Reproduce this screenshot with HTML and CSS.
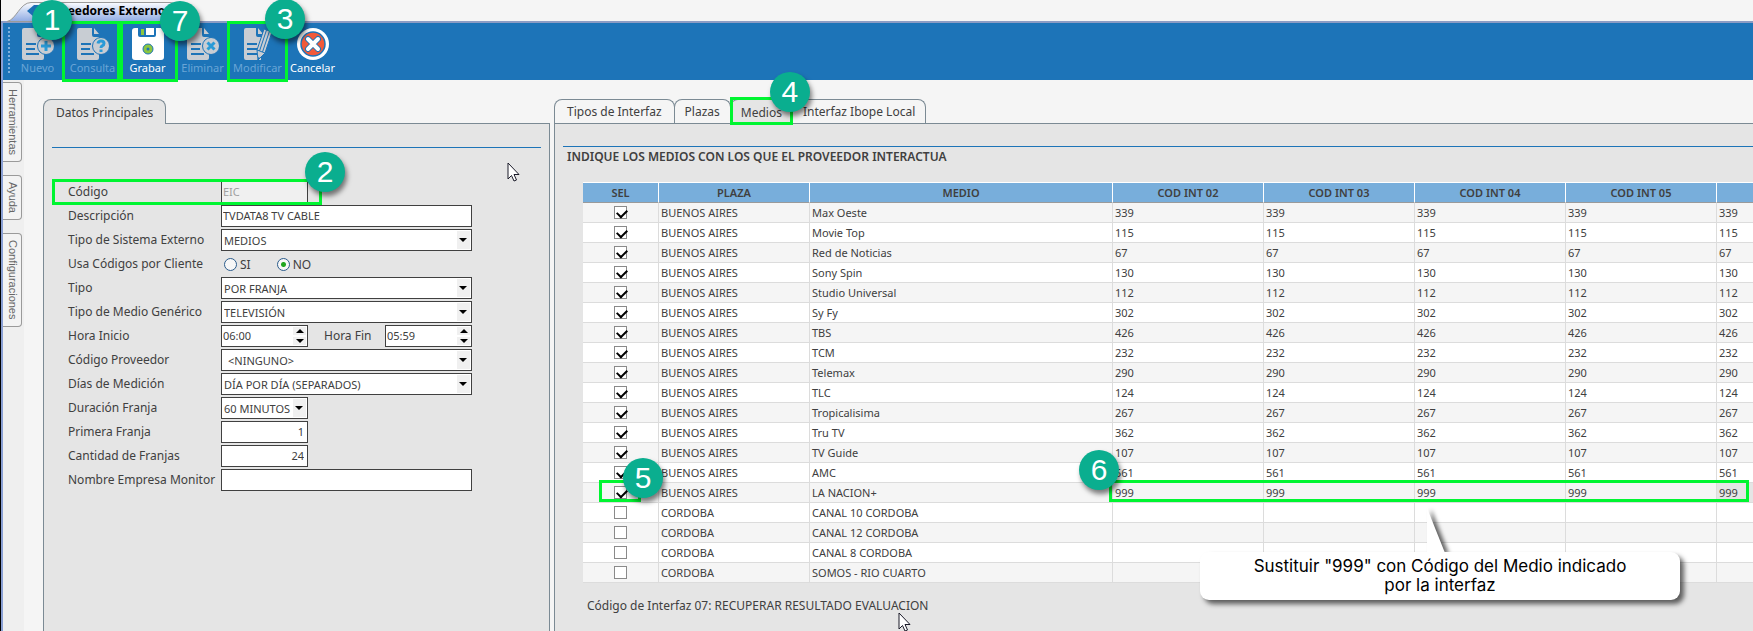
FILE: index.html
```html
<!DOCTYPE html>
<html lang="es">
<head>
  <meta charset="UTF-8">
  <title>Proveedores Externos</title>
  <meta name="viewport" content="width=device-width, initial-scale=1.0">
  <link rel="stylesheet" href="styles.css">
</head>
<body>
  <div class="window">
    <header class="titlebar">
      <svg class="title-tab" width="190" height="23" viewBox="0 0 190 23" aria-hidden="true">
        <defs>
          <linearGradient id="tabFill" x1="0" y1="0" x2="0" y2="1">
            <stop offset="0" stop-color="#fbfcff"/>
            <stop offset="1" stop-color="#8fabe3"/>
          </linearGradient>
        </defs>
        <path d="M3 21.500C12 20 16 2.500 27 2.500H166Q171 2.500 171 8V21.500Z" fill="url(#tabFill)" stroke="#9a9a9a"/>
        <path d="M23 11L30 5L38 5V18L30 17Z" fill="#1c6fb5"/>
      </svg>
      <h1>Proveedores Externos</h1>
    </header>

    <nav class="toolbar">
      <span class="grip"></span>
      <button class="tool" type="button" disabled>
        <svg width="32" height="32" viewBox="0 0 32 32">
          <path class="sheet" d="M2 0H15V7Q15 9 17 9H22V30Q22 32 20 32H2Q0 32 0 30V2Q0 0 2 0ZM17 0L22 6H17Z"/>
          <path class="lines" d="M4 16H14M4 21H13M4 26H17"/>
          <circle class="disc" cx="24" cy="18" r="8.500"/>
          <path class="mark" d="M19 18H29M24 13V23"/>
        </svg>
        <span>Nuevo</span>
      </button>
      <button class="tool" type="button" disabled>
        <svg width="32" height="32" viewBox="0 0 32 32">
          <path class="sheet" d="M2 0H15V7Q15 9 17 9H22V30Q22 32 20 32H2Q0 32 0 30V2Q0 0 2 0ZM17 0L22 6H17Z"/>
          <path class="lines" d="M4 16H14M4 21H13M4 26H17"/>
          <circle class="disc" cx="24" cy="18" r="8.500"/>
          <path class="mark" d="M21 15.500Q21.500 13 24 13Q27 13 27 15.500Q27 17 25 18Q24 18.600 24 20M24 21.500V24"/>
        </svg>
        <span>Consulta</span>
        <i class="frame"></i>
      </button>
      <button class="tool active" type="button">
        <svg width="32" height="32" viewBox="0 0 32 32">
          <path fill="#fff" d="M3 0H29L32 4V29Q32 32 29 32H3Q0 32 0 29V3Q0 0 3 0Z"/>
          <path fill="#1d74b8" d="M6 0H24V7Q24 9 22 9H8Q6 9 6 7Z"/>
          <path fill="#fff" d="M14 0H22V7H14Z"/>
          <path fill="#8cc63f" d="M9 1H12V7H9Z"/>
          <circle cx="16" cy="21" r="5" fill="#8cc63f" stroke="#1d74b8"/>
          <circle cx="16" cy="21" r="1.500" fill="#1d74b8"/>
        </svg>
        <span>Grabar</span>
        <i class="frame"></i>
      </button>
      <button class="tool" type="button" disabled>
        <svg width="32" height="32" viewBox="0 0 32 32">
          <path class="sheet" d="M2 0H15V7Q15 9 17 9H22V30Q22 32 20 32H2Q0 32 0 30V2Q0 0 2 0ZM17 0L22 6H17Z"/>
          <path class="lines" d="M4 16H14M4 21H13M4 26H17"/>
          <circle class="disc" cx="24" cy="18" r="8.500"/>
          <path class="mark" d="M20.500 14.500L27.500 21.500M27.500 14.500L20.500 21.500"/>
        </svg>
        <span>Eliminar</span>
      </button>
      <button class="tool" type="button" disabled>
        <svg width="32" height="32" viewBox="0 0 32 32">
          <path class="sheet" d="M4 0H14V7Q14 9 16 9H19V32H4Q2 32 2 30V2Q2 0 4 0ZM16 0L21 6H16Z"/>
          <path class="lines" d="M5 16H15M5 21H15M5 26H15"/>
          <path d="M22 1L30 4L23 25L16 32L15 22Z" fill="#c8cdd3" stroke="#1d74b8"/>
          <path d="M24.500 2L17.500 23M27.500 3L20.500 24M15 22L23 25M16 32L17 29" fill="none" stroke="#1d74b8"/>
        </svg>
        <span>Modificar</span>
        <i class="frame"></i>
      </button>
      <button class="tool active" type="button">
        <svg width="32" height="32" viewBox="0 0 32 32">
          <circle cx="16" cy="16" r="16" fill="#fff"/>
          <circle cx="16" cy="16" r="12" fill="#f15a3a" stroke="#1d74b8" stroke-width="1.500"/>
          <path d="M11 11L21 21M21 11L11 21" stroke="#1d74b8" stroke-width="6" stroke-linecap="round"/>
          <path d="M11 11L21 21M21 11L11 21" stroke="#fff" stroke-width="4" stroke-linecap="round"/>
        </svg>
        <span>Cancelar</span>
      </button>
      <b class="badge badge-1">1</b>
      <b class="badge badge-7">7</b>
      <b class="badge badge-3">3</b>
    </nav>

    <main class="workspace">
      <aside class="dock">
        <button type="button">Herramientas</button>
        <button type="button">Ayuda</button>
        <button type="button">Configuraciones</button>
      </aside>

      <section class="pane pane-main">
        <div class="tabs">
          <button class="tab selected" type="button">Datos Principales</button>
        </div>
        <div class="sheet-body">
          <form class="form">
            <div class="row row-code">
              <label for="codigo">Código</label>
              <input class="short" id="codigo" type="text" value="EIC" disabled>
              <i class="frame"></i>
              <b class="badge badge-2">2</b>
            </div>
            <div class="row">
              <label for="descripcion">Descripción</label>
              <input id="descripcion" type="text" value="TVDATA8 TV CABLE">
            </div>
            <div class="row">
              <label for="sistema">Tipo de Sistema Externo</label>
              <div class="combo"><select id="sistema"><option>MEDIOS</option></select></div>
            </div>
            <div class="row">
              <span class="label">Usa Códigos por Cliente</span>
              <div class="radios">
                <label><input type="radio" name="cliente">SI</label>
                <label><input type="radio" name="cliente" checked>NO</label>
              </div>
            </div>
            <div class="row">
              <label for="tipo">Tipo</label>
              <div class="combo"><select id="tipo"><option>POR FRANJA</option></select></div>
            </div>
            <div class="row">
              <label for="generico">Tipo de Medio Genérico</label>
              <div class="combo"><select id="generico"><option>TELEVISIÓN</option></select></div>
            </div>
            <div class="row">
              <label for="inicio">Hora Inicio</label>
              <div class="spin">
                <input id="inicio" type="text" value="06:00">
                <div class="arrows"><button type="button" aria-label="Subir"></button><button type="button" aria-label="Bajar"></button></div>
              </div>
              <label class="inner" for="fin">Hora Fin</label>
              <div class="spin">
                <input id="fin" type="text" value="05:59">
                <div class="arrows"><button type="button" aria-label="Subir"></button><button type="button" aria-label="Bajar"></button></div>
              </div>
            </div>
            <div class="row">
              <label for="proveedor">Código Proveedor</label>
              <div class="combo"><select class="indent" id="proveedor"><option>&lt;NINGUNO&gt;</option></select></div>
            </div>
            <div class="row">
              <label for="dias">Días de Medición</label>
              <div class="combo"><select id="dias"><option>DÍA POR DÍA (SEPARADOS)</option></select></div>
            </div>
            <div class="row">
              <label for="duracion">Duración Franja</label>
              <div class="combo short"><select id="duracion"><option>60 MINUTOS</option></select></div>
            </div>
            <div class="row">
              <label for="primera">Primera Franja</label>
              <input class="short number" id="primera" type="text" value="1">
            </div>
            <div class="row">
              <label for="cantidad">Cantidad de Franjas</label>
              <input class="short number" id="cantidad" type="text" value="24">
            </div>
            <div class="row">
              <label for="empresa">Nombre Empresa Monitor</label>
              <input id="empresa" type="text">
            </div>
          </form>
          <svg class="cursor cursor-form" width="13" height="20" viewBox="0 0 13 20"><path d="M1 1V17L4.500 13.500L7 19L9.500 18L7 12.500H12Z" fill="#fff" stroke="#1a1a28"/></svg>
        </div>
      </section>

      <section class="pane pane-detail">
        <div class="tabs">
          <button class="tab" type="button">Tipos de Interfaz</button>
          <button class="tab" type="button">Plazas</button>
          <button class="tab selected" type="button">Medios<i class="frame"></i><b class="badge badge-4">4</b></button>
          <button class="tab" type="button">Interfaz Ibope Local</button>
        </div>
        <div class="sheet-body">
          <h2>INDIQUE LOS MEDIOS CON LOS QUE EL PROVEEDOR INTERACTUA</h2>
          <div class="grid">
            <div class="grid-scroll">
              <table>
                <colgroup>
                  <col class="c-sel"><col class="c-plaza"><col class="c-medio">
                  <col class="c-cod"><col class="c-cod"><col class="c-cod"><col class="c-cod"><col class="c-cod">
                </colgroup>
                <thead>
                  <tr>
                    <th>SEL</th><th>PLAZA</th><th>MEDIO</th>
                    <th>COD INT 02</th><th>COD INT 03</th><th>COD INT 04</th><th>COD INT 05</th><th></th>
                  </tr>
                </thead>
                <tbody id="medios"></tbody>
              </table>
            </div>
            <i class="frame frame-sel"></i>
            <i class="frame frame-codes"></i>
            <b class="badge badge-5">5</b>
            <b class="badge badge-6">6</b>
            <div class="callout">
              <svg class="tail" width="30" height="48" viewBox="0 0 30 48" aria-hidden="true"><path d="M2 2L20 47H2Z" fill="#fff"/></svg>
              <p>Sustituir "999" con Código del Medio indicado<br>por la interfaz</p>
            </div>
          </div>
          <p class="status">Código de Interfaz 07: RECUPERAR RESULTADO EVALUACION</p>
          <svg class="cursor cursor-status" width="13" height="20" viewBox="0 0 13 20"><path d="M1 1V17L4.500 13.500L7 19L9.500 18L7 12.500H12Z" fill="#fff" stroke="#1a1a28"/></svg>
        </div>
      </section>
    </main>
  </div>

<script>
  const medios = [
    ['BUENOS AIRES', 'Max Oeste', '339'],
    ['BUENOS AIRES', 'Movie Top', '115'],
    ['BUENOS AIRES', 'Red de Noticias', '67'],
    ['BUENOS AIRES', 'Sony Spin', '130'],
    ['BUENOS AIRES', 'Studio Universal', '112'],
    ['BUENOS AIRES', 'Sy Fy', '302'],
    ['BUENOS AIRES', 'TBS', '426'],
    ['BUENOS AIRES', 'TCM', '232'],
    ['BUENOS AIRES', 'Telemax', '290'],
    ['BUENOS AIRES', 'TLC', '124'],
    ['BUENOS AIRES', 'Tropicalisima', '267'],
    ['BUENOS AIRES', 'Tru TV', '362'],
    ['BUENOS AIRES', 'TV Guide', '107'],
    ['BUENOS AIRES', 'AMC', '561'],
    ['BUENOS AIRES', 'LA NACION+', '999'],
    ['CORDOBA', 'CANAL 10 CORDOBA', ''],
    ['CORDOBA', 'CANAL 12 CORDOBA', ''],
    ['CORDOBA', 'CANAL 8 CORDOBA', ''],
    ['CORDOBA', 'SOMOS - RIO CUARTO', '']
  ];

  document.getElementById('medios').innerHTML = medios.map(([plaza, medio, codigo]) => `
    <tr class="${codigo === '999' ? 'current' : ''}">
      <td class="sel"><input type="checkbox" aria-label="${medio}" ${codigo ? 'checked' : ''}></td>
      <td>${plaza}</td>
      <td>${medio}</td>
      ${`<td>${codigo}</td>`.repeat(5)}
    </tr>`).join('');
</script>
</body>
</html>
```
FILE: styles.css
```css
* {
  box-sizing: border-box;
}

body {
  margin: 0;
  background: #f5f5f5;
  color: #404040;
  font-family: "Noto Sans", sans-serif;
  font-size: 12px;
}

button,
input,
select {
  font-family: inherit;
  color: inherit;
  margin: 0;
}

h1,
h2,
p {
  margin: 0;
}

.window {
  display: flex;
  flex-direction: column;
  min-height: 100vh;
  border-left: 1px solid #000;
}

/* Title and toolbar */
.titlebar {
  position: relative;
  display: flex;
  align-items: center;
  height: 23px;
  padding-left: 40px;
  border-bottom: 2px solid #8c9cc4;
}

.title-tab {
  position: absolute;
  left: 3px;
  top: 0;
}

.titlebar h1 {
  position: relative;
  font-size: 12px;
  line-height: 20px;
  color: #000;
}

.toolbar {
  position: relative;
  display: flex;
  height: 57px;
  padding-left: 5px;
  border-left: 2px solid #8aa0d4;
  background: #1d74b8;
}

.grip {
  width: 2px;
  margin: 4px 0 6px;
  background: repeating-linear-gradient(#7fb0dc 0 2px, transparent 2px 4px);
}

.tool {
  position: relative;
  display: flex;
  flex-direction: column;
  align-items: center;
  width: 55px;
  padding: 5px 0 0;
  border: 0;
  background: none;
  font-size: 11px;
  line-height: 16px;
  color: #69a5d6;
  white-space: nowrap;
}

.tool svg {
  flex: none;
}

.tool.active {
  color: #fff;
}

.sheet {
  fill: #c8cdd3;
}

.lines {
  fill: none;
  stroke: #1d74b8;
  stroke-width: 2;
}

.disc {
  fill: #c8cdd3;
  stroke: #1d74b8;
  stroke-width: 1;
}

.mark {
  fill: none;
  stroke: #2a9bd7;
  stroke-width: 3;
}

/* Step marks laid over the screen */
.frame {
  position: absolute;
  border: 3px solid #00f531;
  pointer-events: none;
}

.tool .frame {
  inset: -2px -3px;
}

.badge {
  position: absolute;
  z-index: 5;
  width: 40px;
  height: 40px;
  border-radius: 50%;
  background: #0aae8f;
  box-shadow: 2px 4px 5px rgba(0, 0, 0, 0.5);
  color: #fff;
  font: 30px/40px "Liberation Sans", sans-serif;
  text-align: center;
}

.badge-1 {
  left: 29px;
  top: -23px;
}

.badge-7 {
  left: 157px;
  top: -22px;
}

.badge-3 {
  left: 262px;
  top: -24px;
}

.badge-2 {
  left: 237px;
  top: -29px;
}

.badge-4 {
  left: 39px;
  top: -28px;
}

.badge-5 {
  left: 40px;
  top: 276px;
}

.badge-6 {
  left: 496px;
  top: 268px;
}

/* Workspace */
.workspace {
  flex: 1;
  display: flex;
  border-left: 2px solid #8aa0d4;
}

.dock {
  display: flex;
  flex-direction: column;
  align-items: flex-start;
  gap: 13px;
  width: 21px;
  margin-right: 19px;
  padding-top: 2px;
  background: #efefef;
}

.dock button {
  width: 19px;
  padding: 6px 0;
  border: 1px solid #9a9a9a;
  border-left: 0;
  border-radius: 0 4px 4px 0;
  background: #f3f3f3;
  font: 11px/17px "Liberation Sans", sans-serif;
  color: #666;
  writing-mode: vertical-rl;
}

.pane {
  display: flex;
  flex-direction: column;
  padding-top: 19px;
}

.pane-main {
  flex: 0 0 507px;
}

.pane-detail {
  flex: 1;
  min-width: 0;
  margin-left: 4px;
}

.tabs {
  display: flex;
  height: 25px;
}

.tab {
  position: relative;
  z-index: 1;
  height: 24px;
  padding: 0 12px;
  border: 1px solid #7b8a94;
  border-bottom: 0;
  border-radius: 8px 8px 0 0;
  background: #f5f5f5;
  font-size: 12px;
  white-space: nowrap;
}

.tab + .tab {
  margin-left: -1px;
  padding: 0 10px;
}

.tab.selected {
  z-index: 2;
  height: 25px;
  background: #e5e5e5;
}

.tab .frame {
  inset: -3px -1px -1px;
}

.sheet-body {
  position: relative;
  flex: 1;
  min-width: 0;
  margin-top: -1px;
  border: 1px solid #7b8a94;
  border-bottom: 0;
  background: #e5e5e5;
}

.pane-detail .sheet-body {
  border-right: 0;
}

/* Form */
.form {
  display: flex;
  flex-direction: column;
  gap: 2px;
  margin: 23px 8px 0;
  padding: 33px 0 0 16px;
  border-top: 1px solid #1d74b8;
}

.row {
  position: relative;
  display: flex;
  align-items: center;
  height: 22px;
}

.row > label,
.row > .label {
  width: 153px;
  line-height: 20px;
  white-space: nowrap;
}

.row > label.inner {
  width: 77px;
  padding-left: 16px;
}

.row input[type="text"],
.combo {
  width: 251px;
  height: 22px;
  padding: 0 1px 2px;
  border: 1px solid #404040;
  border-radius: 0;
  background: #fff;
  font-size: 11px;
}

.row input.short,
.combo.short {
  width: 87px;
}

.row input:disabled {
  background: #f0f0f0;
  color: #a0a0a0;
}

.row input.number {
  padding-right: 3px;
  text-align: right;
}

.row-code .frame {
  left: -16px;
  top: -2px;
  width: 270px;
  height: 26px;
}

.combo {
  position: relative;
  padding: 0;
}

.combo select {
  display: block;
  width: 100%;
  height: 20px;
  padding: 0 14px 0 2px;
  border: 0;
  background: none;
  font-size: 11px;
  appearance: none;
}

.combo select.indent {
  padding-left: 6px;
}

.combo::after {
  content: "";
  position: absolute;
  right: 1px;
  top: 1px;
  width: 13px;
  height: 18px;
  background: #f0f0f0;
  pointer-events: none;
}

.combo::before {
  content: "";
  position: absolute;
  z-index: 1;
  right: 4px;
  top: 8px;
  border: 4px solid transparent;
  border-top-color: #000;
  border-bottom: 0;
  pointer-events: none;
}

.radios {
  display: flex;
  gap: 26px;
  padding-left: 3px;
}

.radios label {
  display: flex;
  align-items: center;
  gap: 3px;
}

.radios input {
  width: 13px;
  height: 13px;
  border: 1px solid #2b5c8c;
  border-radius: 50%;
  background: #f7f7f7;
  appearance: none;
}

.radios input:checked {
  background: radial-gradient(circle, #1fa51f 0 2px, #f7f7f7 3px);
}

.spin {
  position: relative;
}

.row .spin input {
  display: block;
  width: 87px;
}

.arrows {
  position: absolute;
  right: 2px;
  top: 2px;
  display: flex;
  flex-direction: column;
  gap: 2px;
}

.arrows button {
  display: flex;
  align-items: center;
  justify-content: center;
  width: 13px;
  height: 8px;
  padding: 0;
  border: 0;
  background: #f0f0f0;
}

.arrows button::after {
  content: "";
  border: 4px solid transparent;
  border-bottom-color: #000;
  border-top: 0;
}

.arrows button:last-child::after {
  border-top: 4px solid #000;
  border-bottom: 0;
}

.cursor {
  position: absolute;
}

.cursor-form {
  left: 463px;
  top: 38px;
}

.cursor-status {
  left: 343px;
  top: 488px;
}

/* Grid of media */
.pane-detail h2 {
  margin: 22px 0 0 8px;
  padding: 1px 4px;
  border-top: 1px solid #1d74b8;
  font-size: 12px;
  font-weight: 600;
  line-height: 18px;
}

.grid {
  position: relative;
  margin: 15px 0 0 28px;
}

.grid-scroll {
  overflow: hidden;
  border-top: 1px solid #fff;
}

table {
  width: 1285px;
  border-collapse: separate;
  border-spacing: 0;
  table-layout: fixed;
}

.c-sel {
  width: 76px;
}

.c-plaza {
  width: 151px;
}

.c-medio {
  width: 303px;
}

.c-cod {
  width: 151px;
}

th {
  height: 20px;
  padding: 0;
  border-right: 1px solid #fff;
  border-bottom: 1px solid #9a9a9a;
  background: #78aedb;
  font-size: 11px;
  font-weight: 600;
  line-height: 16px;
}

td {
  height: 20px;
  padding: 0 2px;
  border-right: 1px solid #dcdcdc;
  border-bottom: 1px solid #dcdcdc;
  background: #fff;
  font-size: 11px;
  line-height: 16px;
  white-space: nowrap;
}

tbody tr:nth-child(odd) td {
  background: #f5f5f5;
}

tbody tr.current td:last-child {
  background: #e5e5e5;
}

td.sel {
  text-align: center;
  line-height: 0;
}

td.sel input {
  width: 13px;
  height: 13px;
  border: 1px solid #8a8a8a;
  background: #fff;
  vertical-align: middle;
  appearance: none;
}

td.sel input:checked::after {
  content: "";
  display: block;
  width: 8px;
  height: 5px;
  margin: 2px 0 0 2px;
  border: solid #000;
  border-width: 0 0 2px 2px;
  transform: rotate(-45deg);
}

.frame-sel {
  left: 16px;
  top: 298px;
  width: 42px;
  height: 22px;
}

.frame-codes {
  left: 526px;
  right: 4px;
  top: 298px;
  height: 22px;
}

.callout {
  position: absolute;
  left: 617px;
  top: 370px;
  width: 480px;
  padding: 5px 0;
  border-radius: 9px;
  background: #fff;
  box-shadow: 4px 4px 5px rgba(0, 0, 0, 0.6);
  color: #000;
  font-family: Inter, sans-serif;
  font-size: 17px;
  line-height: 19px;
  text-align: center;
}

.tail {
  position: absolute;
  left: 225px;
  top: -46px;
  filter: drop-shadow(4px 1px 2px rgba(0, 0, 0, 0.6));
  clip-path: inset(0 0 2px 0);
}

.status {
  margin: 13px 0 0 32px;
  line-height: 20px;
}
```
